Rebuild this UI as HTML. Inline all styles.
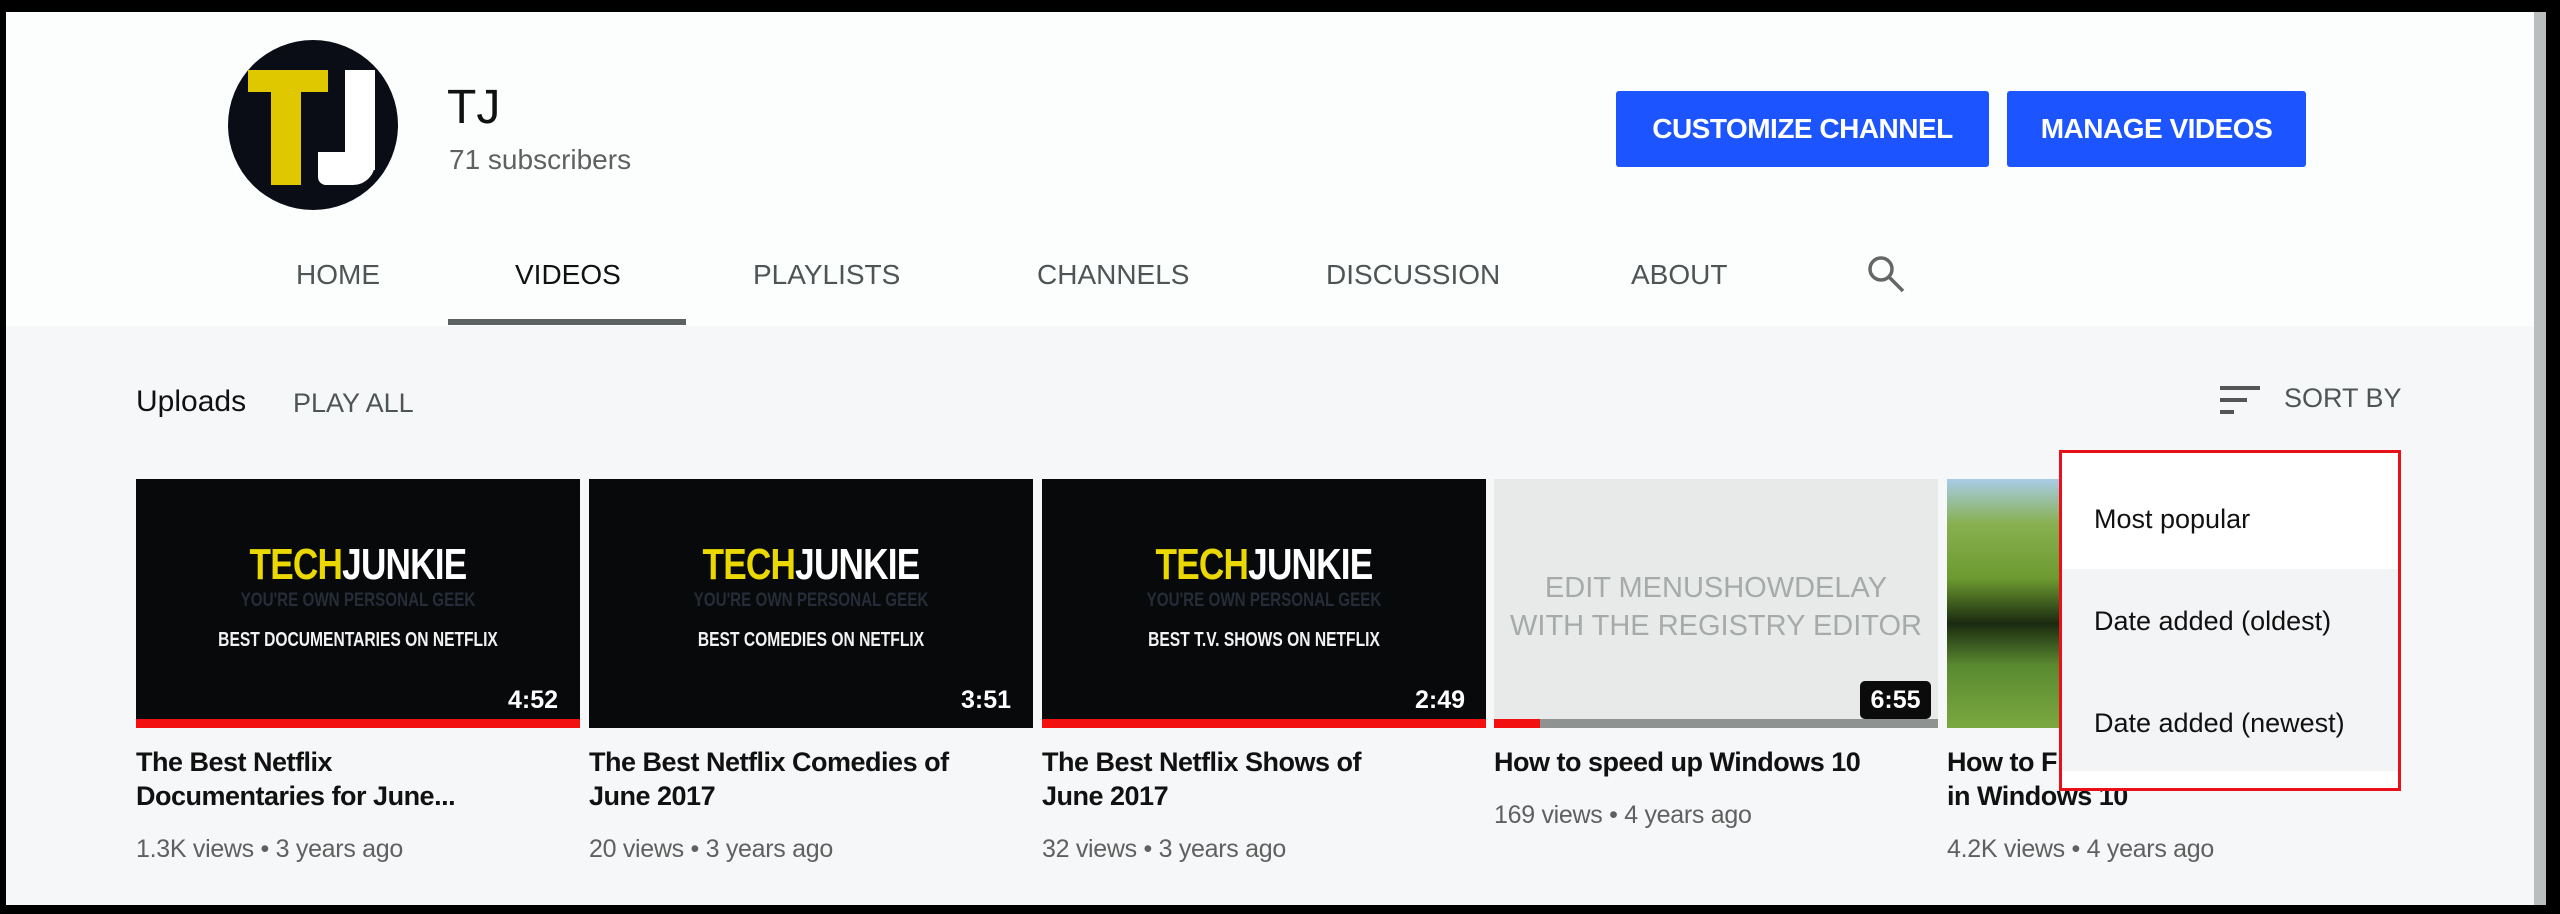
<!DOCTYPE html>
<html><head><meta charset="utf-8"><style>
*{margin:0;padding:0;box-sizing:border-box}
body{width:2560px;height:914px;background:#000;position:relative;overflow:hidden;font-family:"Liberation Sans",Arial,sans-serif}
.abs{position:absolute}
#page{position:absolute;left:6px;top:12px;width:2528px;height:893px;background:#f6f7f8}
#hdr{position:absolute;left:0;top:0;width:2528px;height:314px;background:#fcfdfd}
.tab{position:absolute;top:259px;font-size:28px;color:#4f5555;white-space:nowrap}
.btn{position:absolute;top:91px;height:76px;background:#1c55ff;color:#fff;font-weight:bold;font-size:28px;display:flex;align-items:center;justify-content:center;border-radius:3px;letter-spacing:-0.5px}
.th{position:absolute;top:479px;width:444px;height:249px;background:#08090b;overflow:hidden}
.tj{position:absolute;left:0;width:444px;text-align:center;font-weight:bold}
.t1{top:540px;font-size:44px;letter-spacing:-1px;transform:scaleX(.8)}
.t2{top:590px;font-size:19px;color:#262c38;transform:scaleX(.8)}
.t3{top:629px;font-size:20px;color:#f2f2f2;transform:scaleX(.78)}
.dur{position:absolute;color:#fff;font-size:25px;font-weight:bold}
.bar{position:absolute;left:0;bottom:0;height:9px;width:444px;background:#f21010}
.title{position:absolute;font-size:27px;font-weight:bold;color:#111;line-height:34px;letter-spacing:-0.5px}
.meta{position:absolute;font-size:25px;color:#606060;letter-spacing:-0.3px}
</style></head><body>
<div id="page">
<div id="hdr"></div>
</div>
<div class="abs" style="left:2534px;top:12px;width:12px;height:893px;background:#b9bfbf"></div>
<!-- avatar -->
<div class="abs" style="left:228px;top:40px;width:170px;height:170px;border-radius:50%;background:#0a0d16;overflow:hidden">
 <div class="abs" style="left:20px;top:30px;width:80px;height:22px;background:#e0c800"></div>
 <div class="abs" style="left:43px;top:30px;width:30px;height:115px;background:#e0c800"></div>
 <div class="abs" style="left:117px;top:30px;width:30px;height:100px;background:#fff"></div>
 <div class="abs" style="left:90px;top:112px;width:57px;height:33px;background:#fff;border-radius:0 0 22px 8px"></div>
</div>
<div class="abs" style="left:447px;top:80px;font-size:48px;color:#111">TJ</div>
<div class="abs" style="left:449px;top:144px;font-size:28px;color:#606060">71 subscribers</div>
<div class="btn" style="left:1616px;width:373px">CUSTOMIZE CHANNEL</div>
<div class="btn" style="left:2007px;width:299px">MANAGE VIDEOS</div>
<div class="tab" style="left:296px">HOME</div>
<div class="tab" style="left:515px;color:#111">VIDEOS</div>
<div class="tab" style="left:753px">PLAYLISTS</div>
<div class="tab" style="left:1037px">CHANNELS</div>
<div class="tab" style="left:1326px">DISCUSSION</div>
<div class="tab" style="left:1631px">ABOUT</div>
<svg class="abs" style="left:1866px;top:254px" width="42" height="42" viewBox="0 0 42 42"><circle cx="15" cy="15" r="11" fill="none" stroke="#666" stroke-width="3.5"/><line x1="23" y1="23" x2="37" y2="37" stroke="#666" stroke-width="3.5"/></svg>
<div class="abs" style="left:448px;top:319px;width:238px;height:6px;background:#5c6262"></div>
<div class="abs" style="left:136px;top:385px;font-size:30px;color:#111">Uploads</div>
<div class="abs" style="left:293px;top:388px;font-size:27px;color:#4f5555">PLAY ALL</div>
<svg class="abs" style="left:2220px;top:386px" width="42" height="30" viewBox="0 0 42 30"><rect x="0" y="0" width="40" height="4" fill="#555"/><rect x="0" y="12" width="27" height="4" fill="#555"/><rect x="0" y="24" width="14" height="4" fill="#555"/></svg>
<div class="abs" style="left:2284px;top:383px;font-size:27px;color:#4f5555">SORT BY</div>

<!-- thumbs -->
<div class="th" style="left:136px"><div class="bar"></div></div>
<div class="th" style="left:589px"></div>
<div class="th" style="left:1042px"><div class="bar"></div></div>
<div class="th" style="left:1494px;background:#e8eaea"><div class="bar" style="background:#8e9392"></div><div class="bar" style="width:46px"></div>
 <div class="abs" style="left:0;width:444px;top:90px;text-align:center;font-size:29px;color:#a6abaa;line-height:38px">EDIT MENUSHOWDELAY<br>WITH THE REGISTRY EDITOR</div>
 <div class="abs" style="left:366px;top:202px;width:71px;height:38px;background:#0b0b0b;border-radius:5px;color:#fff;font-size:25px;font-weight:bold;text-align:center;line-height:38px">6:55</div>
</div>
<div class="th" style="left:1947px;background:linear-gradient(180deg,#a8cce8 0%,#88b050 18%,#6c9a30 40%,#1a2a10 58%,#5a8a30 75%,#7aa840 100%)"></div>

<div class="abs" style="left:136px;top:0">
 <div class="tj t1" style="color:#fff"><span style="color:#ead800">TECH</span>JUNKIE</div>
 <div class="tj t2">YOU'RE OWN PERSONAL GEEK</div>
 <div class="tj t3">BEST DOCUMENTARIES ON NETFLIX</div>
</div>
<div class="abs" style="left:589px;top:0">
 <div class="tj t1" style="color:#fff"><span style="color:#ead800">TECH</span>JUNKIE</div>
 <div class="tj t2">YOU'RE OWN PERSONAL GEEK</div>
 <div class="tj t3">BEST COMEDIES ON NETFLIX</div>
</div>
<div class="abs" style="left:1042px;top:0">
 <div class="tj t1" style="color:#fff"><span style="color:#ead800">TECH</span>JUNKIE</div>
 <div class="tj t2">YOU'RE OWN PERSONAL GEEK</div>
 <div class="tj t3">BEST T.V. SHOWS ON NETFLIX</div>
</div>
<div class="dur" style="left:508px;top:686px">4:52</div>
<div class="dur" style="left:961px;top:686px">3:51</div>
<div class="dur" style="left:1415px;top:686px">2:49</div>

<div class="title" style="left:136px;top:745px">The Best Netflix<br>Documentaries for June...</div>
<div class="title" style="left:589px;top:745px">The Best Netflix Comedies of<br>June 2017</div>
<div class="title" style="left:1042px;top:745px">The Best Netflix Shows of<br>June 2017</div>
<div class="title" style="left:1494px;top:745px">How to speed up Windows 10</div>
<div class="title" style="left:1947px;top:745px">How to F<br>in Windows 10</div>
<div class="meta" style="left:136px;top:835px">1.3K views • 3 years ago</div>
<div class="meta" style="left:589px;top:835px">20 views • 3 years ago</div>
<div class="meta" style="left:1042px;top:835px">32 views • 3 years ago</div>
<div class="meta" style="left:1494px;top:801px">169 views • 4 years ago</div>
<div class="meta" style="left:1947px;top:835px">4.2K views • 4 years ago</div>

<!-- menu -->
<div class="abs" style="left:2059px;top:450px;width:342px;height:341px;border:3px solid #e8101a;background:#fff">
 <div class="abs" style="left:0;top:116px;width:336px;height:202px;background:#f3f4f5"></div>
 <div class="abs" style="left:32px;top:51px;font-size:27px;color:#111">Most popular</div>
 <div class="abs" style="left:32px;top:153px;font-size:27px;color:#111">Date added (oldest)</div>
 <div class="abs" style="left:32px;top:255px;font-size:27px;color:#111">Date added (newest)</div>
</div>
</body></html>
